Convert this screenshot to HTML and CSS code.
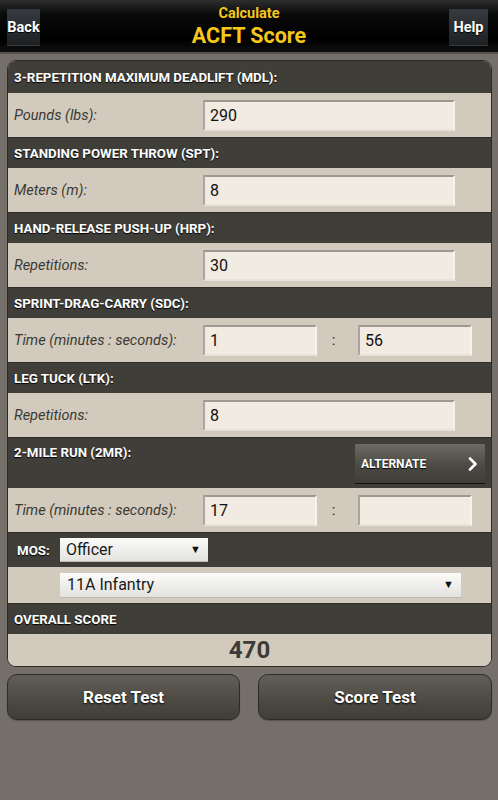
FILE: index.html
```html
<!DOCTYPE html>
<html>
<head>
<meta charset="utf-8">
<link rel="stylesheet" href="styles.css">
</head>
<body>
<header class="topbar">
  <button class="navbtn back">Back</button>
  <div class="title">
    <div class="sub">Calculate</div>
    <div class="main">ACFT Score</div>
  </div>
  <button class="navbtn help">Help</button>
</header>

<main class="content">
  <section class="card">
    <div class="head first">3-REPETITION MAXIMUM DEADLIFT (MDL):</div>
    <div class="field">
      <span class="label">Pounds (lbs):</span>
      <div class="input wide">290</div>
    </div>

    <div class="head">STANDING POWER THROW (SPT):</div>
    <div class="field">
      <span class="label">Meters (m):</span>
      <div class="input wide">8</div>
    </div>

    <div class="head">HAND-RELEASE PUSH-UP (HRP):</div>
    <div class="field">
      <span class="label">Repetitions:</span>
      <div class="input wide">30</div>
    </div>

    <div class="head">SPRINT-DRAG-CARRY (SDC):</div>
    <div class="field time">
      <span class="label">Time (minutes : seconds):</span>
      <div class="input half">1</div>
      <span class="colon">:</span>
      <div class="input half">56</div>
    </div>

    <div class="head">LEG TUCK (LTK):</div>
    <div class="field">
      <span class="label">Repetitions:</span>
      <div class="input wide">8</div>
    </div>

    <div class="head tall">
      <span class="headtext">2-MILE RUN (2MR):</span>
      <button class="alt">ALTERNATE
        <svg class="chev" width="10" height="14" viewBox="0 0 10 14"><path d="M2 1.5 L7.5 7 L2 12.5" fill="none" stroke="#fff" stroke-width="2.6" stroke-linecap="round" stroke-linejoin="round"/></svg>
      </button>
    </div>
    <div class="field time">
      <span class="label">Time (minutes : seconds):</span>
      <div class="input half">17</div>
      <span class="colon">:</span>
      <div class="input half"></div>
    </div>

    <div class="mosrow">
      <span class="moslabel">MOS:</span>
      <div class="select small"><span>Officer</span><span class="arrow">▼</span></div>
    </div>
    <div class="selrow">
      <div class="select big"><span>11A Infantry</span><span class="arrow">▼</span></div>
    </div>

    <div class="head">OVERALL SCORE</div>
    <div class="score">470</div>
  </section>

  <div class="actions">
    <button class="action">Reset Test</button>
    <button class="action">Score Test</button>
  </div>
</main>
</body>
</html>
```

FILE: styles.css
```css
* { box-sizing: border-box; }
html, body { margin: 0; padding: 0; }
body {
  width: 498px;
  height: 800px;
  background: #747069;
  font-family: Roboto, "Liberation Sans", sans-serif;
  overflow: hidden;
}
button { font-family: inherit; cursor: pointer; }

.topbar {
  height: 54px;
  background: linear-gradient(#2e2e2e 0px, #0a0a0a 14px, #000 40px, #111 52px);
  border-bottom: 2px solid #55524c;
  display: grid;
  grid-template-columns: 1fr auto 1fr;
  align-items: start;
  padding: 9px 10px 0 7px;
}
.navbtn {
  height: 37px;
  padding: 0;
  border: none;
  border-bottom: 1px solid #3a3d40;
  border-radius: 1px;
  background: linear-gradient(#373b40, #1e2124);
  color: #fff;
  font-weight: 700;
  font-size: 14.5px;
  text-shadow: 0 1px 1px #000;
}
.back { width: 33px; justify-self: start; }
.help { width: 39px; justify-self: end; }
.title {
  text-align: center;
  color: #f5c71a;
  font-weight: 700;
  line-height: 1;
  margin-top: -2px;
  padding-left: 3px;
}
.title .sub { font-size: 14.5px; }
.title .main { font-size: 21.5px; margin-top: 3px; }

.content { padding: 6px 6px 0 7px; }

.card {
  border: 1px solid #2b2a26;
  border-radius: 9px;
  overflow: hidden;
  background: #d2cabd;
}

.head {
  height: 31px;
  background: #403e39;
  border-top: 1px solid #2e2d29;
  color: #fff;
  font-weight: 700;
  font-size: 13.3px;
  display: flex;
  align-items: center;
  padding-left: 6px;
  text-shadow: 0 1px 1px #000;
}
.head.first { height: 32px; border-top: none; }
.head.tall {
  height: 51px;
  align-items: flex-start;
  justify-content: space-between;
  padding-top: 7px;
  padding-right: 6px;
}
.headtext { display: block; }

.alt {
  margin-top: -1px;
  width: 130px;
  height: 40px;
  border: none;
  border-bottom: 1px solid #111;
  background: linear-gradient(#6e6a63, #4a4842 60%, #403e39);
  color: #fff;
  font-weight: 700;
  font-size: 12px;
  text-align: left;
  padding: 0 0 0 6px;
  display: flex;
  align-items: center;
  justify-content: space-between;
  padding-right: 7px;
  text-shadow: 0 1px 1px #000;
}
.chev { display: block; }

.field {
  height: 44px;
  display: grid;
  grid-template-columns: 195px 252px;
  align-items: center;
  background: #d2cabd;
}
.field.time { grid-template-columns: 195px 114px 41px 114px; }
.label {
  padding-left: 6px;
  font-style: italic;
  font-size: 14.5px;
  color: #3b3a35;
}
.input {
  height: 31px;
  background: #f1ebe1;
  border-top: 2px solid #9c9993;
  border-left: 2px solid #a9a69f;
  border-right: 2px solid #f6f3ee;
  border-bottom: 2px solid #e6e2da;
  font-size: 16px;
  color: #111;
  padding-left: 5px;
  line-height: 27px;
}
.colon {
  text-align: center;
  font-size: 15px;
  color: #222;
  padding-right: 8px;
}

.mosrow {
  height: 35px;
  background: #403e39;
  border-top: 1px solid #2e2d29;
  display: flex;
  align-items: center;
  padding-left: 9px;
}
.moslabel {
  color: #fff;
  font-weight: 700;
  font-size: 13.3px;
  width: 43px;
  text-shadow: 0 1px 1px #000;
}
.select {
  display: flex;
  justify-content: space-between;
  align-items: center;
  background: linear-gradient(#fbfbfa, #e3e2df);
  color: #1a1a1a;
  font-size: 16px;
  padding: 0 7px 0 6px;
  border-bottom: 1px solid #bdb9b2;
}
.select.small { width: 148px; height: 24px; }
.select.big { width: 401px; height: 25px; padding-left: 7px; }
.arrow { font-size: 11px; color: #111; }

.selrow {
  height: 36px;
  display: flex;
  align-items: center;
  padding-left: 52px;
  background: #d2cabd;
}

.score {
  height: 32px;
  display: flex;
  align-items: center;
  justify-content: center;
  font-weight: 700;
  font-size: 24px;
  color: #3b3a36;
  background: #d2cabd;
}

.actions {
  display: flex;
  justify-content: space-between;
  margin-top: 7px;
  padding-right: 0;
}
.action {
  width: 233px;
  height: 46px;
  border: 1px solid #2c2b27;
  border-radius: 10px;
  background: linear-gradient(#625e58, #48463f 70%, #403e39);
  color: #fff;
  font-weight: 700;
  font-size: 17px;
  text-shadow: 0 1px 2px #000;
  box-shadow: 0 1px 1px rgba(0,0,0,0.25);
}
.action + .action { width: 234px; }
```
